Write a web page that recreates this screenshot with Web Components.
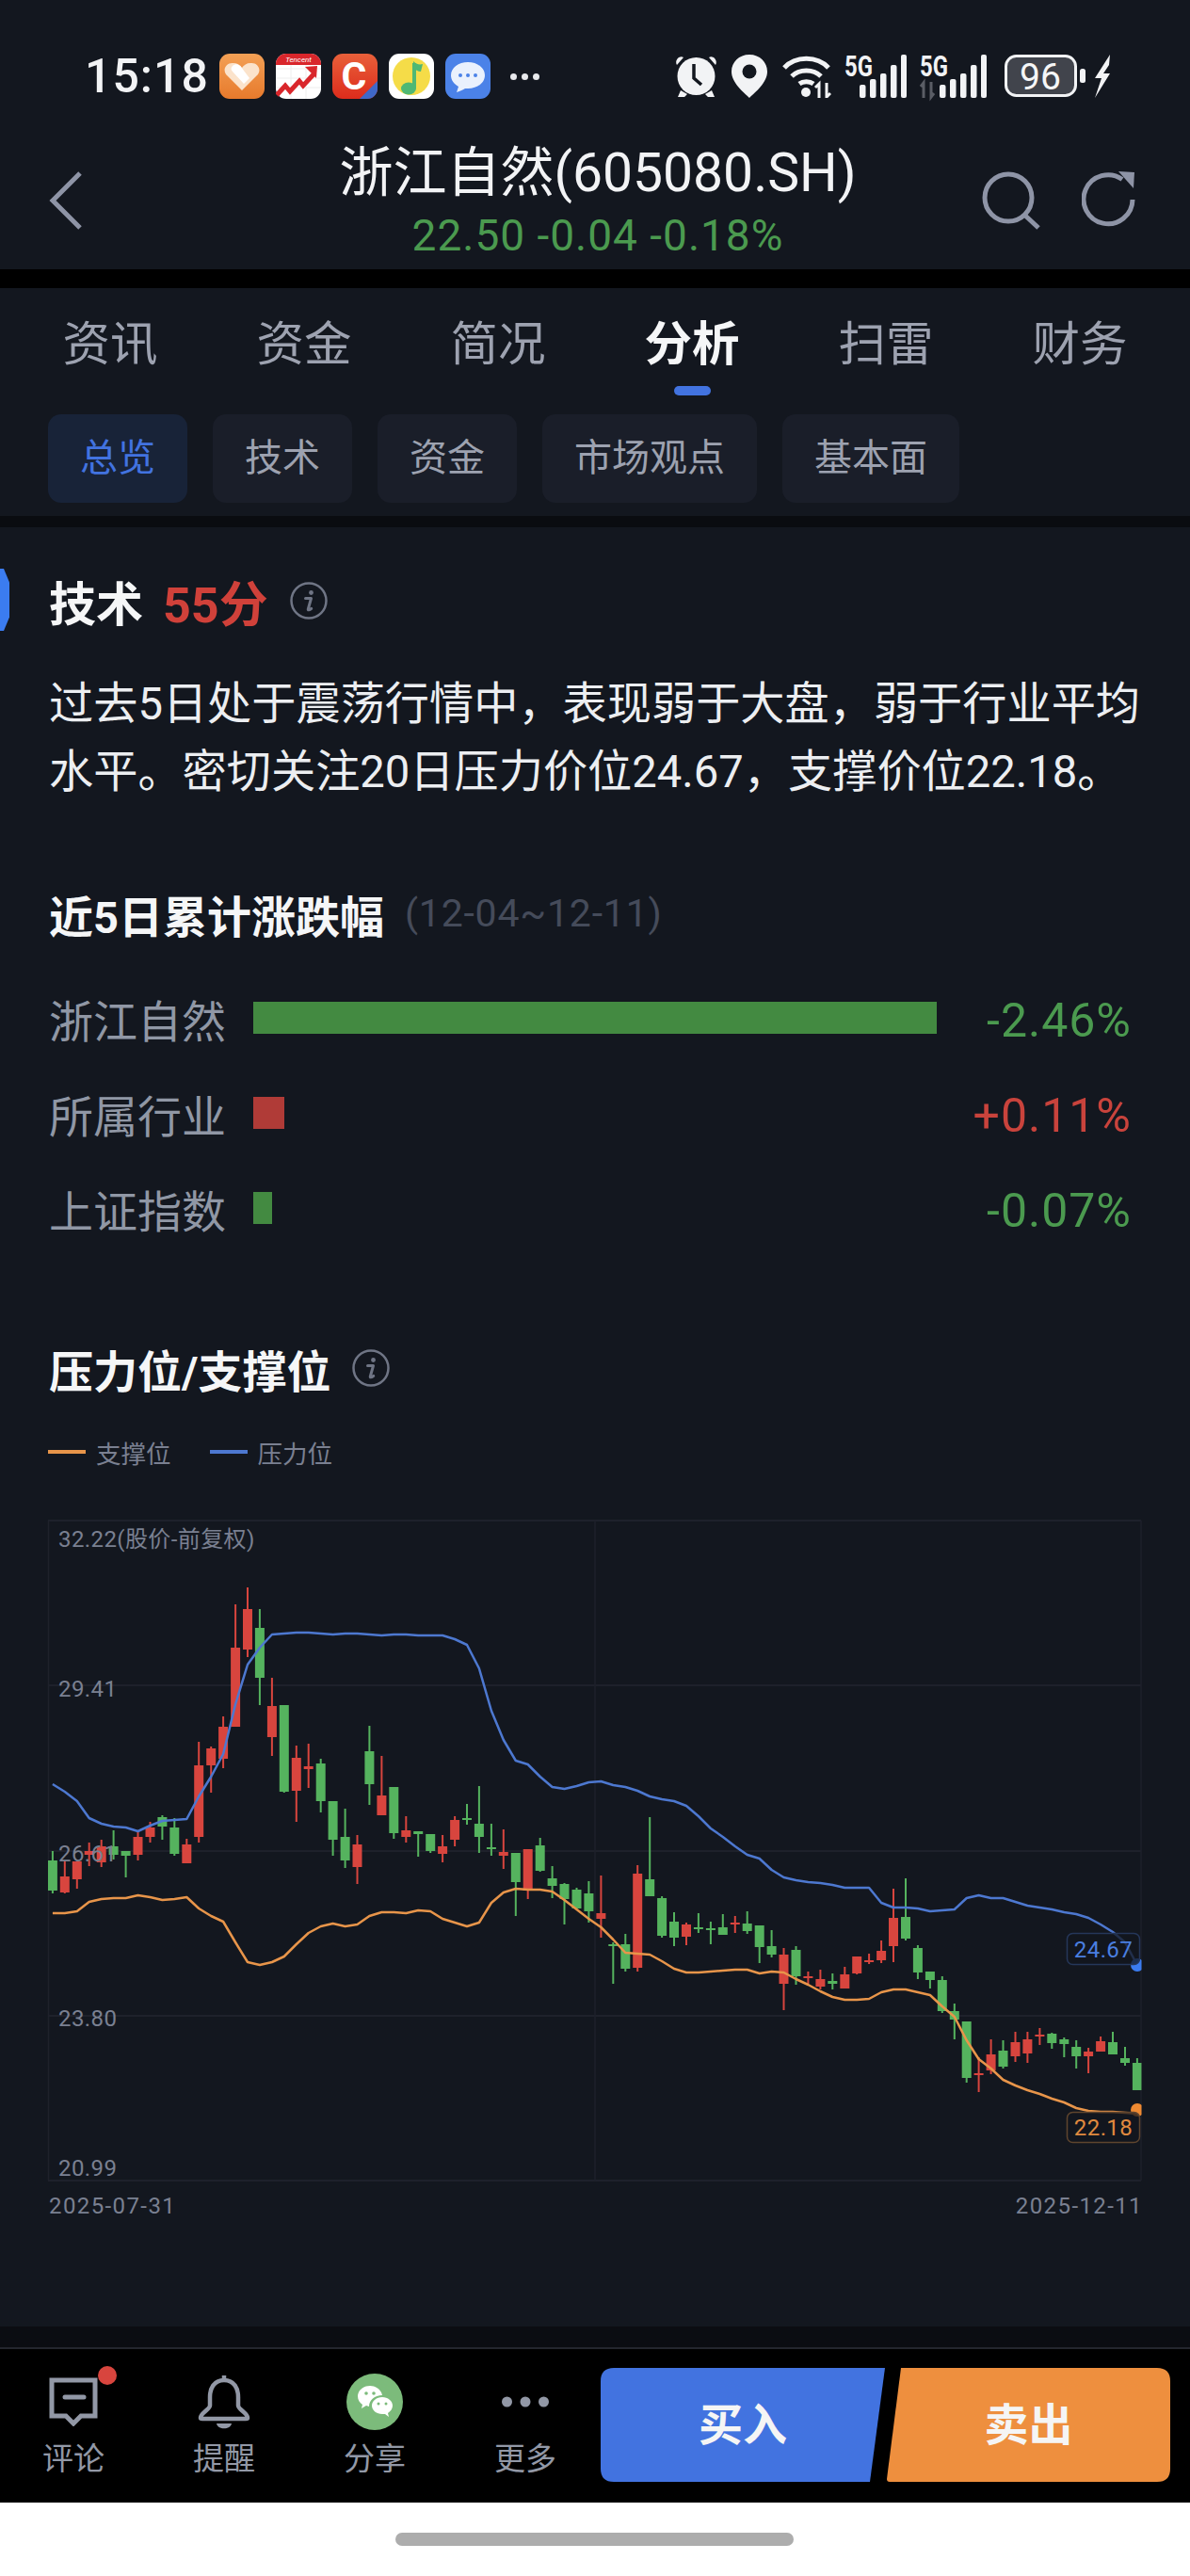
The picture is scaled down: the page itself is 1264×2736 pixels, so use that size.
<!DOCTYPE html>
<html lang="zh-CN">
<head>
<meta charset="utf-8">
<title>浙江自然(605080.SH)</title>
<style>
  html, body { margin: 0; padding: 0; background: #000; }
  body { width: 1264px; font-family: Roboto, "Noto Sans CJK SC", sans-serif; }
  stock-page { display: block; }
</style>
</head>
<body>
<stock-page>
  <status-bar></status-bar>
  <nav-header name="浙江自然(605080.SH)" quote="22.50 -0.04 -0.18%"></nav-header>
  <tab-bar></tab-bar>
  <content-panel>
    <score-section></score-section>
    <perf-bars></perf-bars>
    <level-section></level-section>
  </content-panel>
  <action-bar></action-bar>
  <home-pill></home-pill>
</stock-page>

<script>
const FONT = `Roboto, "Noto Sans CJK SC", sans-serif`;
const BG = "#13171f";

function define(tag, css, html) {
  customElements.define(tag, class extends HTMLElement {
    constructor() {
      super();
      this.attachShadow({ mode: "open" });
    }
    connectedCallback() {
      const body = typeof html === "function" ? html(this) : html;
      this.shadowRoot.innerHTML = `<style>${css}</style>${body}`;
    }
  });
}

const infoIcon = `
  <svg width="42" height="42" viewBox="0 0 42 42" fill="none">
    <circle cx="21" cy="21" r="18.5" stroke="#6f7585" stroke-width="2.5"/>
    <circle cx="23.5" cy="12.5" r="2.4" fill="#6f7585"/>
    <path d="M17.5 18.5h6l-3.2 11.5c-.3 1 .6 1.2 3.4-.6" stroke="#6f7585" stroke-width="3" stroke-linecap="round" stroke-linejoin="round"/>
  </svg>`;

// status bar
define("status-bar", `
  :host { display: flex; align-items: center; height: 48px; padding: 57px 0 0 90px; background: ${BG}; color: #f2f3f5; }
  .time { font-size: 50px; font-weight: 500; line-height: 48px; width: 143px; letter-spacing: 1px; white-space: nowrap; }
  .apps { display: flex; gap: 12px; }
  .more { display: flex; gap: 5px; margin-left: 21px; }
  .more i { width: 7px; height: 7px; border-radius: 50%; background: #e8e9ec; }
  .right { display: flex; align-items: center; margin-left: auto; margin-right: 84px; }
  svg { display: block; }
  .five { overflow: visible; }
`, `
  <span class="time">15:18</span>
  <div class="apps">
    <svg width="48" height="48" viewBox="0 0 48 48">
      <defs><linearGradient id="o" x1="0" y1="0" x2="0" y2="1"><stop offset="0" stop-color="#f3a055"/><stop offset="1" stop-color="#e77a2c"/></linearGradient></defs>
      <rect width="48" height="48" rx="11" fill="url(#o)"/>
      <path d="M24 39 7 22c-4-6 1-13 8-12 4 0 7 2 9 5 2-3 5-5 9-5 7-1 12 6 8 12z" fill="#fbe3cb"/>
      <path d="M14 13c3-3 7-2 9 1l9 12-6 6-12-13c-2-2-2-4 0-6z" fill="#fff"/>
    </svg>
    <svg width="48" height="48" viewBox="0 0 48 48">
      <rect width="48" height="48" rx="11" fill="#fff"/>
      <path d="M0 11a11 11 0 0 1 11-11h26a11 11 0 0 1 11 11v1H0z" fill="#d9262b"/>
      <text x="24" y="9" font-size="8" font-style="italic" fill="#fff" text-anchor="middle" font-family="${FONT.replace(/"/g, "'")}">Tencent</text>
      <path d="M0 16h48M0 26h48M0 36h48M16 12v36M32 12v36" stroke="#eee" stroke-width="1"/>
      <path d="M1 44l9-10 5 6 10-11 4 5 11-12" fill="none" stroke="#d9262b" stroke-width="5"/>
      <path d="M31 14l13-1-1 13z" fill="#d9262b"/>
    </svg>
    <svg width="48" height="48" viewBox="0 0 48 48">
      <defs><linearGradient id="r" x1="0" y1="0" x2="0" y2="1"><stop offset="0" stop-color="#e8603a"/><stop offset="1" stop-color="#dd2c1c"/></linearGradient></defs>
      <rect width="48" height="48" rx="11" fill="url(#r)"/>
      <text x="23" y="38" font-size="41" font-weight="700" fill="#fff" text-anchor="middle" font-family="Roboto, sans-serif">C</text>
      <path d="M48 29v8a11 11 0 0 1-11 11h-8z" fill="#3f68c8"/>
    </svg>
    <svg width="48" height="48" viewBox="0 0 48 48">
      <rect width="48" height="48" rx="11" fill="#fff"/>
      <circle cx="24" cy="24" r="20" fill="#f5dc48"/>
      <ellipse cx="21" cy="37" rx="8" ry="6.500" fill="#4fb874"/>
      <path d="M27 37V10" fill="none" stroke="#4fb874" stroke-width="4"/>
      <path d="M26 8c3 3 6 4 10 3l-2 8c-3 0-6-2-8-4z" fill="#4fb874"/>
    </svg>
    <svg width="48" height="48" viewBox="0 0 48 48">
      <rect width="48" height="48" rx="11" fill="#4b82e8"/>
      <path d="M24 9c-10 0-18 6-18 14 0 5 3 9 8 12l-2 6c4-1 7-3 9-4h3c10 0 18-6 18-14S34 9 24 9z" fill="#eaf1fd"/>
      <circle cx="16" cy="23" r="2" fill="#4b82e8"/><circle cx="24" cy="23" r="2" fill="#4b82e8"/><circle cx="32" cy="23" r="2" fill="#4b82e8"/>
    </svg>
  </div>
  <div class="more"><i></i><i></i><i></i></div>
  <div class="right">
    <svg width="43" height="46" viewBox="0 0 43 46" fill="#f2f3f5">
      <path d="M1 11 8 3c-4-3-10 3-7 8zM42 11 35 3c4-3 10 3 7 8z"/>
      <circle cx="21.500" cy="23" r="20"/>
      <path d="M19 10v15l8 7" fill="none" stroke="${BG}" stroke-width="3.500"/>
      <path d="M5 38 2 45h7l3-3zM38 38l3 7h-7l-3-3z"/>
    </svg>
    <svg width="38" height="46" viewBox="0 0 38 46" style="margin-left:16px">
      <path d="M19 0C8 0 0 8 0 18c0 12 13 22 19 28 6-6 19-16 19-28C38 8 30 0 19 0z" fill="#f2f3f5"/>
      <circle cx="19" cy="18" r="7.500" fill="${BG}"/>
    </svg>
    <svg width="53" height="46" viewBox="0 0 53 46" fill="none" stroke="#f2f3f5" stroke-width="5" style="margin-left:15px">
      <path d="M3 14C15 1 38 1 50 14"/>
      <path d="M11 23c8-8 23-8 31 0" />
      <path d="M19 31c4-3 11-3 15 0"/>
      <circle cx="26" cy="40" r="5" fill="#f2f3f5" stroke="none"/>
      <path d="M40 46V31l-4 4M48 30v15l4-4" stroke-width="3"/>
    </svg>
    <svg class="five" width="66" height="46" viewBox="0 0 66 46" style="margin-left:14px">
      <text x="0" y="23" font-size="31" font-weight="700" fill="#f2f3f5" textLength="30" lengthAdjust="spacingAndGlyphs" font-family="Roboto, sans-serif">5G</text>
      <g fill="#f2f3f5"><rect x="16" y="32" width="6.500" height="14" rx="2"/><rect x="27" y="26" width="6.500" height="20" rx="2"/><rect x="38" y="20" width="6.500" height="26" rx="2"/><rect x="49" y="11" width="6.500" height="35" rx="2"/><rect x="60" y="0" width="6" height="46" rx="2"/></g>
    </svg>
    <svg class="five" width="71" height="46" viewBox="0 0 71 46" style="margin-left:14px">
      <text x="0" y="23" font-size="31" font-weight="700" fill="#f2f3f5" textLength="30" lengthAdjust="spacingAndGlyphs" font-family="Roboto, sans-serif">5G</text>
      <path d="M4 46V30l-3 4M12 29v16l3-4" fill="none" stroke="#5a5d65" stroke-width="3"/>
      <g fill="#f2f3f5"><rect x="21" y="32" width="6.500" height="14" rx="2"/><rect x="32" y="26" width="6.500" height="20" rx="2"/><rect x="43" y="20" width="6.500" height="26" rx="2"/><rect x="54" y="11" width="6.500" height="35" rx="2"/><rect x="65" y="0" width="6" height="46" rx="2"/></g>
    </svg>
    <svg width="86" height="46" viewBox="0 0 86 46" style="margin-left:19px">
      <rect x="1.500" y="1.500" width="74" height="42" rx="11" fill="#41444c" stroke="#f2f3f5" stroke-width="3"/>
      <text x="38" y="37" font-size="39" fill="#f5f6f7" text-anchor="middle" font-family="Roboto, sans-serif">96</text>
      <rect x="80" y="15" width="6" height="15" rx="2.500" fill="#f2f3f5"/>
    </svg>
    <svg width="18" height="46" viewBox="0 0 18 46" style="margin-left:9px">
      <path d="M17 0 1 25h7l-7 21 16-26h-7l6-9z" fill="#f2f3f5"/>
    </svg>
  </div>
`);

// header with back, name and quote
define("nav-header", `
  :host { display: grid; grid-template-columns: 1fr auto 1fr; height: 181px; padding: 0 58px 0 64px; background: ${BG}; }
  .back { margin: 77px 0 0 -12px; }
  .mid { text-align: center; padding-top: 47px; }
  .name { font-size: 57px; line-height: 64px; color: #f2f3f5; white-space: nowrap; }
  .quote { font-size: 46px; line-height: 40px; margin-top: 14px; color: #4b9a4f; white-space: nowrap; letter-spacing: 1px; }
  .tools { justify-self: end; display: flex; gap: 42px; margin-top: 77px; align-items: flex-start; }
  svg { display: block; }
`, (el) => `
  <svg class="back" width="36" height="62" viewBox="0 0 36 62" fill="none"><path d="M33 2 4 31l29 29" stroke="#8e94a6" stroke-width="5"/></svg>
  <div class="mid">
    <div class="name">${el.getAttribute("name")}</div>
    <div class="quote">${el.getAttribute("quote")}</div>
  </div>
  <div class="tools">
    <svg width="64" height="62" viewBox="0 0 64 62" fill="none" stroke="#8e94a6" stroke-width="5">
      <circle cx="28" cy="28" r="25"/><path d="M45 46l15 14"/>
    </svg>
    <svg width="57" height="62" viewBox="0 0 57 62" fill="none">
      <path d="M43 8.500A26 26 0 1 0 54 30" stroke="#8e94a6" stroke-width="5"/>
      <path d="M39 0l17 1-1 17z" fill="#8e94a6"/>
    </svg>
  </div>
`);

// primary tabs and chips
define("tab-bar", `
  :host { display: block; margin-top: 20px; padding: 30px 14px 14px; background: ${BG}; border-bottom: 12px solid #0a0c10; }
  .tabs { display: flex; height: 84px; margin-bottom: 20px; }
  .tab { flex: 1; display: flex; flex-direction: column; align-items: center; font-size: 50.500px; line-height: 60px; color: #9da2b0; }
  .tab.on { color: #f5f6f7; font-weight: 700; }
  .tab.on::after { content: ""; width: 39px; height: 10px; margin-top: 14px; border-radius: 5px; background: #4273e0; }
  .chips { display: flex; gap: 27px; margin-left: 37px; }
  .chip { height: 94px; padding: 0 34px; border-radius: 14px; background: #1a1e29; color: #9da2b0; font-size: 40px; line-height: 94px; }
  .chip.on { background: #182338; color: #4273e0; }
`, `
  <div class="tabs">
    <div class="tab">资讯</div><div class="tab">资金</div><div class="tab">简况</div>
    <div class="tab on">分析</div><div class="tab">扫雷</div><div class="tab">财务</div>
  </div>
  <div class="chips">
    <div class="chip on">总览</div><div class="chip">技术</div><div class="chip">资金</div>
    <div class="chip">市场观点</div><div class="chip">基本面</div>
  </div>
`);

define("content-panel", `
  :host { display: block; height: 1911px; background: ${BG}; overflow: hidden; }
`, `<slot></slot>`);

// technical score block
define("score-section", `
  :host { display: block; position: relative; padding: 48px 50px 0 52px; }
  .mark { position: absolute; left: 0; top: 44px; width: 10px; height: 66px; background: #3b7cf0; clip-path: polygon(0 0, 40% 0, 100% 22%, 100% 78%, 40% 100%, 0 100%); }
  .head { display: flex; align-items: center; height: 60px; font-size: 50px; font-weight: 700; color: #f5f6f7; }
  .score { color: #d0413a; margin-left: 21px; font-size: 52px; }
  .head svg { margin-left: 22px; }
  p { margin: 44px 0 0; width: 1175px; font-size: 47.200px; line-height: 72px; color: #eceef1; }
`, `
  <div class="mark"></div>
  <div class="head">技术<span class="score">55分</span>${infoIcon}</div>
  <p>过去5日处于震荡行情中，表现弱于大盘，弱于行业平均水平。密切关注20日压力价位24.67，支撑价位22.18。</p>
`);

// five-day change bars
define("perf-bars", `
  :host { display: block; padding: 84px 62px 0 52px; }
  .head { display: flex; align-items: center; height: 60px; margin-bottom: 33px; }
  b { font-size: 47px; color: #f5f6f7; }
  .range { margin-left: 22px; font-size: 41px; color: #454b5a; letter-spacing: .8px; }
  .row { display: flex; align-items: center; height: 101px; }
  .label { box-sizing: border-box; width: 217px; padding-bottom: 5px; font-size: 47px; color: #9097a5; flex: none; white-space: nowrap; }
  .bar { height: 34px; margin-bottom: 6px; }
  .val { margin-left: auto; font-size: 50px; letter-spacing: 1px; }
  .g { background: #438a41; } .r { background: #b03b37; }
  .tg { color: #4b9a4f; } .tr { color: #c9433c; }
`, `
  <div class="head"><b>近5日累计涨跌幅</b><span class="range">(12-04~12-11)</span></div>
  <div class="row"><span class="label">浙江自然</span><div class="bar g" style="width:726px"></div><span class="val tg">-2.46%</span></div>
  <div class="row"><span class="label">所属行业</span><div class="bar r" style="width:33px"></div><span class="val tr">+0.11%</span></div>
  <div class="row"><span class="label">上证指数</span><div class="bar g" style="width:20px"></div><span class="val tg">-0.07%</span></div>
`);

// pressure / support chart data, in page y so it reads against the screenshot
const CANDLES = `g 1966 1976 2008 2011|r 1977 1993 2010 2011|r 1977 1977 1996 2006|r 1957 1966 1970 1982|r 1954 1961 1978 1983|g 1944 1961 1970 1975|g 1966 1966 1971 1994|r 1945 1951 1970 1976|r 1935 1941 1951 1957|g 1928 1930 1940 1954|g 1931 1941 1969 1971|r 1953 1959 1979 1979|r 1850 1875 1951 1957|r 1855 1857 1875 1904|r 1823 1834 1868 1878|r 1704 1750 1834 1834|r 1686 1709 1752 1760|g 1709 1729 1782 1811|r 1782 1812 1845 1865|g 1811 1811 1903 1904|r 1854 1867 1902 1935|r 1852 1876 1879 1899|g 1868 1873 1913 1925|g 1913 1913 1954 1971|g 1921 1951 1976 1984|r 1949 1959 1983 2001|g 1833 1860 1895 1917|r 1865 1907 1928 1928|g 1898 1898 1947 1953|r 1929 1944 1951 1957|g 1945 1945 1948 1972|g 1948 1948 1966 1968|r 1949 1961 1969 1978|r 1929 1933 1954 1961|g 1916 1931 1933 1938|g 1897 1937 1951 1968|g 1937 1962 1963 1971|r 1943 1967 1971 1985|g 1968 1968 1999 2035|r 1964 1964 2008 2017|g 1952 1960 1987 1988|g 1982 1995 2003 2016|g 2000 2001 2017 2044|g 2005 2007 2027 2027|g 1998 2011 2030 2042|r 1992 2032 2038 2058|g 2063 2065 2067 2107|g 2054 2065 2091 2094|r 1981 1990 2090 2094|g 1930 1996 2014 2014|g 2014 2016 2056 2058|g 2031 2041 2058 2067|r 2042 2044 2057 2066|g 2032 2047 2049 2053|g 2041 2048 2049 2065|g 2033 2047 2055 2055|r 2035 2042 2044 2053|g 2030 2043 2051 2054|g 2045 2045 2068 2085|g 2050 2067 2076 2079|r 2069 2076 2107 2135|g 2067 2071 2099 2108|r 2094 2099 2100 2107|r 2092 2102 2110 2113|g 2096 2104 2107 2113|r 2089 2097 2112 2112|r 2078 2078 2096 2097|r 2075 2082 2083 2086|r 2061 2072 2082 2085|r 2006 2037 2067 2084|g 1995 2036 2059 2061|g 2066 2069 2095 2102|g 2094 2094 2103 2112|g 2099 2103 2136 2138|g 2128 2136 2145 2166|g 2147 2147 2207 2212|r 2185 2202 2203 2222|r 2166 2182 2199 2203|g 2167 2178 2195 2197|r 2158 2169 2184 2190|r 2158 2166 2181 2191|r 2154 2161 2162 2172|g 2159 2160 2170 2176|g 2164 2166 2171 2185|g 2167 2174 2184 2197|r 2175 2179 2184 2202|r 2163 2168 2179 2179|g 2158 2169 2182 2182|g 2174 2186 2191 2194|g 2186 2191 2220 2220`;
const PRESSURE = [1895,1903,1913,1931,1937,1940,1941,1945,1939,1934,1933,1932,1908,1887,1863,1810,1768,1750,1736,1735,1734,1734,1735,1736,1735,1735,1736,1737,1736,1736,1737,1737,1737,1741,1747,1772,1817,1848,1870,1874,1887,1898,1900,1897,1893,1892,1896,1898,1902,1908,1911,1913,1918,1929,1942,1951,1961,1970,1974,1986,1994,1997,1999,2000,2002,2005,2005,2005,2021,2026,2026,2027,2030,2029,2028,2016,2013,2016,2016,2020,2024,2026,2028,2031,2033,2037,2044,2052,2063,2087];
const SUPPORT = [2032,2032,2030,2020,2017,2016,2016,2013,2015,2018,2017,2015,2027,2035,2041,2063,2084,2087,2084,2078,2065,2053,2046,2043,2046,2044,2035,2031,2031,2032,2029,2030,2038,2042,2046,2042,2021,2010,2006,2007,2007,2009,2018,2028,2038,2047,2060,2074,2075,2076,2083,2091,2095,2095,2094,2093,2092,2092,2096,2094,2095,2102,2108,2115,2121,2124,2124,2123,2116,2113,2113,2116,2119,2131,2142,2167,2187,2197,2209,2215,2220,2224,2229,2233,2239,2242,2243,2243,2244,2245];

const xAt = (i) => +(55.9 + i * 12.944).toFixed(1);
const linePts = (ys) => ys.map((y, i) => `${xAt(i)},${y}`).join(" ");

function candleMarks() {
  return CANDLES.split("|").map((row, i) => {
    const [kind, high, top, bottom, low] = row.split(" ");
    const x = xAt(i);
    const color = kind === "r" ? "#d8453e" : "#55b35e";
    const h = Math.max(bottom - top, 2);
    return `<rect x="${x - 1}" y="${high}" width="2" height="${low - high}" fill="${color}"/>` +
      `<rect x="${x - 5}" y="${top}" width="10" height="${h}" fill="${color}"/>`;
  }).join("");
}

define("kline-chart", `
  :host { display: block; }
  svg { display: block; }
  text { font-family: ${FONT}; font-size: 24px; fill: #7a8091; letter-spacing: .4px; }
  .dates { display: flex; justify-content: space-between; width: 1159px; margin: 8px 0 0 52px; font-size: 24px; line-height: 36px; color: #7a8091; letter-spacing: 1.400px; }
`, `
  <svg width="1264" height="703" viewBox="0 1614 1264 703">
    <defs><clipPath id="plot"><rect x="51" y="1614" width="1161.500" height="703"/></clipPath></defs>
    <g stroke="#1e212b" stroke-width="2" fill="none">
      <path d="M51 1615H1212M51 1790H1212M51 1966H1212M51 2141H1212M51 2316H1212"/>
      <path d="M51.500 1615V2316M632 1615V2316M1212 1615V2316" stroke-width="1.500"/>
    </g>
    <g clip-path="url(#plot)">
      ${candleMarks()}
      <polyline points="${linePts(PRESSURE)}" fill="none" stroke="#4d78d0" stroke-width="2.500" stroke-linejoin="round"/>
      <polyline points="${linePts(SUPPORT)}" fill="none" stroke="#e8954a" stroke-width="2.500" stroke-linejoin="round"/>
      <circle cx="1208" cy="2087" r="7" fill="#3b7cf0"/>
      <circle cx="1208" cy="2241" r="7" fill="#ef8a32"/>
    </g>
    <text x="62" y="1643">32.22(股价-前复权)</text>
    <text x="62" y="1802">29.41</text>
    <text x="62" y="1977">26.61</text>
    <text x="62" y="2152">23.80</text>
    <text x="62" y="2311">20.99</text>
    <rect x="1133.500" y="2053.500" width="77" height="33" rx="6" fill="${BG}" fill-opacity=".75" stroke="#25375a" stroke-width="1.500"/>
    <text x="1172" y="2079" text-anchor="middle" style="fill:#4a7fe0">24.67</text>
    <rect x="1133.500" y="2243.500" width="77" height="32" rx="6" fill="${BG}" fill-opacity=".75" stroke="#5f452e" stroke-width="1.500"/>
    <text x="1172" y="2268" text-anchor="middle" style="fill:#e08a3f">22.18</text>
  </svg>
  <div class="dates"><span>2025-07-31</span><span style="margin-right:-3px">2025-12-11</span></div>
`);

define("level-section", `
  :host { display: block; padding-top: 87px; }
  .head { display: flex; align-items: center; height: 60px; margin-left: 52px; font-size: 47px; font-weight: 700; color: #f5f6f7; }
  .head svg { margin-left: 22px; }
  .legend { display: flex; align-items: center; height: 36px; margin: 41px 0 54px 51px; font-size: 26.500px; color: #7a8091; }
  .legend i { width: 40px; height: 4px; margin-right: 11px; }
  .legend span { margin-right: 41px; }
`, `
  <div class="head">压力位/支撑位${infoIcon}</div>
  <div class="legend">
    <i style="background:#e8954a"></i><span>支撑位</span>
    <i style="background:#4d78d0"></i><span>压力位</span>
  </div>
  <kline-chart></kline-chart>
`);

// bottom actions
define("action-bar", `
  :host { display: flex; height: 165px; background: #000; border-top: 22px solid #0b0d12; box-shadow: inset 0 2px 0 #24262e; }
  .items { display: flex; margin-left: -2px; }
  .item { position: relative; width: 160px; padding-top: 27px; text-align: center; font-size: 33px; line-height: 36px; color: #9298a6; }
  .ico { height: 61px; margin-bottom: 13px; display: flex; align-items: center; justify-content: center; }
  .dot { position: absolute; left: 106px; top: 20px; width: 20px; height: 20px; border-radius: 50%; background: #d8453e; }
  .btn { margin-top: 22px; height: 121px; color: #f5f5f5; font-size: 47px; font-weight: 700; line-height: 121px; text-align: center; }
  .buy { width: 302px; background: #4273e0; clip-path: path("M14 0H302L286 121H14Q0 121 0 107V14Q0 0 14 0Z"); }
  .sell { width: 301px; margin-left: 2px; background: #ee8f3e; clip-path: path("M15 0H287Q301 0 301 14V107Q301 121 287 121H3Q0 121 0 118Z"); }
`, `
  <div class="items">
    <div class="item"><div class="ico">
      <svg width="52" height="52" viewBox="0 0 52 52" fill="none" stroke="#9298a6" stroke-width="5">
        <path d="M3 3h46v38H34l-8 8-8-8H3z"/><path d="M17 21h20" stroke-linecap="round"/>
      </svg></div>评论<span class="dot"></span></div>
    <div class="item"><div class="ico">
      <svg width="56" height="60" viewBox="0 0 56 60" fill="none" stroke="#9298a6" stroke-width="4.500">
        <path d="M28 2v5"/><path d="M28 7c-11 0-15 9-15 18v9c0 4-10 8-10 13 0 1 1 1 2 1h46c1 0 2 0 2-1 0-5-10-9-10-13v-9c0-9-4-18-15-18z"/>
        <path d="M20 53h16c-1 7-15 7-16 0z" fill="#9298a6" stroke="none"/>
      </svg></div>提醒</div>
    <div class="item"><div class="ico">
      <svg width="60" height="60" viewBox="0 0 60 60">
        <circle cx="30" cy="30" r="30" fill="#7cbb7b"/>
        <path d="M25 13c-7 0-13 5-13 11 0 4 2 7 5 9l-1 4 5-3 3 1c0-7 6-12 14-12-1-6-7-10-13-10z" fill="#fff"/>
        <path d="M38 25c-6 0-11 4-11 9s5 9 11 9h3l4 3-1-4c3-2 5-5 5-8 0-5-5-9-11-9z" fill="#fff"/>
        <circle cx="21" cy="21" r="1.800" fill="#7cbb7b"/><circle cx="29" cy="21" r="1.800" fill="#7cbb7b"/>
        <circle cx="34" cy="32" r="1.500" fill="#7cbb7b"/><circle cx="42" cy="32" r="1.500" fill="#7cbb7b"/>
      </svg></div>分享</div>
    <div class="item"><div class="ico">
      <svg width="50" height="12" viewBox="0 0 50 12" fill="#9298a6">
        <circle cx="5.500" cy="6" r="5.500"/><circle cx="25" cy="6" r="5.500"/><circle cx="44.500" cy="6" r="5.500"/>
      </svg></div>更多</div>
  </div>
  <div class="btn buy">买入</div>
  <div class="btn sell">卖出</div>
`);

define("home-pill", `
  :host { display: block; height: 78px; background: #fff; box-sizing: border-box; padding: 32px 0 0 420px; }
  div { width: 423px; height: 14px; border-radius: 7px; background: #adadad; }
`, `<div></div>`);

define("stock-page", `:host { display: block; }`, `<slot></slot>`);
</script>
</body>
</html>
